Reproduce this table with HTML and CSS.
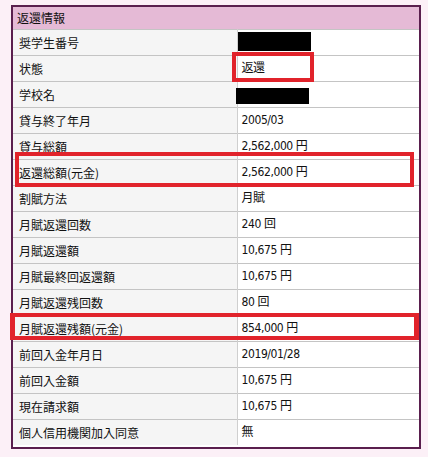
FILE: index.html
```html
<!DOCTYPE html>
<html lang="ja">
<head>
<meta charset="utf-8">
<link rel="stylesheet" href="styles.css">
</head>
<body>
<div class="page">
  <div class="box">
    <table class="info">
      <colgroup><col class="c1"><col class="c2"></colgroup>
      <thead>
        <tr><th colspan="2">返還情報</th></tr>
      </thead>
      <tbody>
        <tr><td class="lbl">奨学生番号</td><td class="val"><span class="redact r1"></span></td></tr>
        <tr><td class="lbl">状態</td><td class="val">返還</td></tr>
        <tr><td class="lbl">学校名</td><td class="val"><span class="redact r2"></span></td></tr>
        <tr><td class="lbl">貸与終了年月</td><td class="val">2005/03</td></tr>
        <tr><td class="lbl">貸与総額</td><td class="val">2,562,000 円</td></tr>
        <tr><td class="lbl">返還総額(元金)</td><td class="val">2,562,000 円</td></tr>
        <tr><td class="lbl">割賦方法</td><td class="val">月賦</td></tr>
        <tr><td class="lbl">月賦返還回数</td><td class="val">240 回</td></tr>
        <tr><td class="lbl">月賦返還額</td><td class="val">10,675 円</td></tr>
        <tr><td class="lbl">月賦最終回返還額</td><td class="val">10,675 円</td></tr>
        <tr><td class="lbl">月賦返還残回数</td><td class="val">80 回</td></tr>
        <tr><td class="lbl">月賦返還残額(元金)</td><td class="val">854,000 円</td></tr>
        <tr><td class="lbl">前回入金年月日</td><td class="val">2019/01/28</td></tr>
        <tr><td class="lbl">前回入金額</td><td class="val">10,675 円</td></tr>
        <tr><td class="lbl">現在請求額</td><td class="val">10,675 円</td></tr>
        <tr><td class="lbl">個人信用機関加入同意</td><td class="val">無</td></tr>
      </tbody>
    </table>
  </div>
  <div class="mark m-status"></div>
  <div class="mark m-total"></div>
  <div class="mark m-remain"></div>
</div>
</body>
</html>
```
FILE: styles.css
```css
html, body {
  margin: 0;
  padding: 0;
  background: #fcf0f7;
}
body {
  font-family: "Noto Sans CJK JP", "DejaVu Sans", sans-serif;
  font-size: 12px;
  color: #111;
}
.page {
  position: relative;
  width: 428px;
  height: 457px;
  padding: 5px 0 0 11px;
  box-sizing: border-box;
}
.box {
  width: 410px;
  height: 444px;
  box-sizing: border-box;
  border: 2px solid #5a1f4e;
  background: #fff;
}
.info {
  width: 406px;
  border-collapse: collapse;
  table-layout: fixed;
}
.c1 { width: 224px; }
.info th {
  height: 22px;
  padding: 0 0 0 4px;
  background: #e5bad6;
  text-align: left;
  font-weight: normal;
  font-size: 12px;
  line-height: 22px;
}
.info td {
  height: 25px;
  padding: 0;
  border-top: 1px solid #c4c4c4;
  line-height: 25px;
  white-space: nowrap;
}
.info .lbl {
  padding-left: 6px;
  background: #f5f5f5;
  border-right: 1px solid #cfcfcf;
}
.info .val {
  padding-left: 4px;
  background: #fff;
  font-family: "DejaVu Sans Condensed", "Noto Sans CJK JP", sans-serif;
  letter-spacing: -0.4px;
}
.redact {
  display: inline-block;
  background: #000;
  vertical-align: middle;
}
.r1 { width: 73px; height: 19px; margin-top: -3px; margin-left: -4px; }
.r2 { width: 73px; height: 16px; margin-left: -6px; margin-top: 6px; vertical-align: top; }
.mark {
  position: absolute;
  border: 4px solid #e1232b;
  box-sizing: border-box;
}
.m-status { left: 232px; top: 52px; width: 82px; height: 30px; }
.m-total { left: 15px; top: 152px; width: 399px; height: 35px; }
.m-remain { left: 10px; top: 313px; width: 409px; height: 27px; border-width: 4px 5px; }
```
